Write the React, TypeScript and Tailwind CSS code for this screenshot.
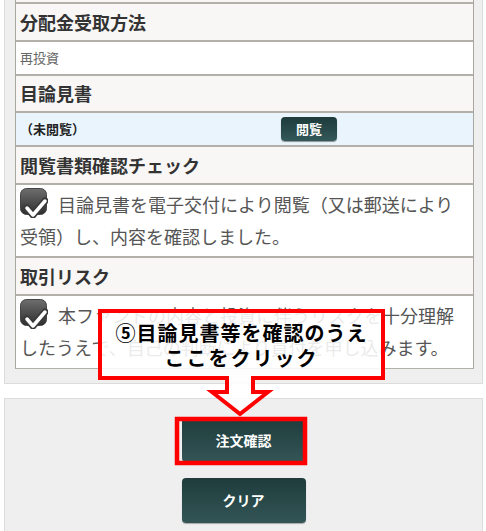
import React from "react";

const font = '"Noto Sans CJK JP", "Noto Sans", sans-serif';

const CheckIcon: React.FC = () => (
  <svg width="28" height="30" viewBox="0 0 28 30" className="inline-block align-[-6px] mr-[10px]">
    <defs>
      <linearGradient id="cbg" x1="0" y1="0" x2="0" y2="1">
        <stop offset="0" stopColor="#6e6e6e" />
        <stop offset="1" stopColor="#2e2e2e" />
      </linearGradient>
    </defs>
    <rect x="0.5" y="0.5" width="26" height="26" rx="6" fill="url(#cbg)" stroke="#444" />
    <path d="M7 20 L13 27 L25 13" fill="none" stroke="#3a3a3a" strokeWidth="7" strokeLinecap="round" strokeLinejoin="round" />
    <path d="M7 20 L13 27 L25 13" fill="none" stroke="#ffffff" strokeWidth="3.5" strokeLinecap="round" strokeLinejoin="round" />
  </svg>
);

const HeaderRow: React.FC<{ children: React.ReactNode; h: string }> = ({ children, h }) => (
  <div className={`flex items-center px-[4px] bg-[#f8f7f5] border-b-2 border-[#b3afa9] text-[18px] font-bold text-[#333] ${h}`}>
    {children}
  </div>
);

const App: React.FC = () => {
  return (
    <div className="relative w-[486px] h-[531px] overflow-hidden bg-white" style={{ fontFamily: font }}>
      {/* order form panel */}
      <div className="ml-[4px] w-[479px] bg-[#efefef] border-x border-b border-[#dcdcdc] pl-[10px] pr-[8px] pb-[14px]">
        <div className="border-x border-[#aaa6a0] bg-white">
          <div className="h-[4px] bg-[#f8f7f5] border-b-2 border-[#b3afa9]" />
          <HeaderRow h="h-[38px]">分配金受取方法</HeaderRow>
          <div className="h-[34px] flex items-center px-[4px] bg-white border-b-2 border-[#b3afa9] text-[13px] text-[#666]">
            再投資
          </div>
          <HeaderRow h="h-[37px]">目論見書</HeaderRow>
          <div className="h-[34px] flex items-center px-[4px] bg-[#e9f4fc] border-b-2 border-[#b3afa9]">
            <span className="w-[261px] text-[13px] font-bold text-[#222]">（未閲覧）</span>
            <button
              type="button"
              className="w-[56px] h-[24px] rounded-[4px] bg-gradient-to-b from-[#1d3b3b] to-[#34585a] text-white text-[13px] font-bold shadow-[0_1px_1px_rgba(0,0,0,0.4)]"
            >
              閲覧
            </button>
          </div>
          <HeaderRow h="h-[38px]">閲覧書類確認チェック</HeaderRow>
          <div className="h-[73px] px-[4px] pt-[3px] bg-white border-b-2 border-[#b3afa9] text-[18px] leading-[32px] text-[#555]">
            <CheckIcon />
            目論見書を電子交付により閲覧（又は郵送により受領）し、内容を確認しました。
          </div>
          <HeaderRow h="h-[38px]">取引リスク</HeaderRow>
          <div className="h-[73px] px-[4px] pt-[3px] bg-white border-b border-[#b3afa9] text-[18px] leading-[32px] text-[#555]">
            <CheckIcon />
            本ファンドの内容と投資に伴うリスクを十分理解したうえで、自己の判断により買付を申し込みます。
          </div>
        </div>
      </div>

      <div className="h-[14px]" />

      {/* action panel */}
      <div className="ml-[4px] w-[479px] h-[140px] bg-[#efefef] border-t border-x border-[#dcdcdc] pt-[19px] flex flex-col items-center gap-[16px]">
        <button
          type="button"
          className="w-[124px] h-[44px] rounded-[4px] bg-gradient-to-b from-[#1e3c3c] to-[#345556] text-white text-[14px] font-bold"
        >
          注文確認
        </button>
        <button
          type="button"
          className="w-[124px] h-[45px] rounded-[4px] bg-gradient-to-b from-[#1e3c3c] to-[#345556] text-white text-[14px] font-bold shadow-[0_1px_1px_rgba(0,0,0,0.3)]"
        >
          クリア
        </button>
      </div>

      {/* annotation callout */}
      <svg className="absolute left-0 top-0 pointer-events-none" width="486" height="531" viewBox="0 0 486 531">
        <path
          d="M100 311 H383 V378 H253 V392 H268 L240 414 L212 392 H227 V378 H100 Z"
          fill="#ffffff"
          fillOpacity="0.88"
          stroke="#ff0000"
          strokeWidth="4"
          strokeLinejoin="miter"
        />
        <rect x="177" y="419" width="128" height="44" fill="none" stroke="#ff0000" strokeWidth="4.5" />
      </svg>
      <div className="absolute left-[98px] top-[309px] w-[287px] h-[71px] flex flex-col items-center justify-center text-[20px] leading-[25px] font-bold text-black pointer-events-none">
        <span className="tracking-[1px]">⑤目論見書等を確認のうえ</span>
        <span className="tracking-[2px]">ここをクリック</span>
      </div>
    </div>
  );
};

export default App;
